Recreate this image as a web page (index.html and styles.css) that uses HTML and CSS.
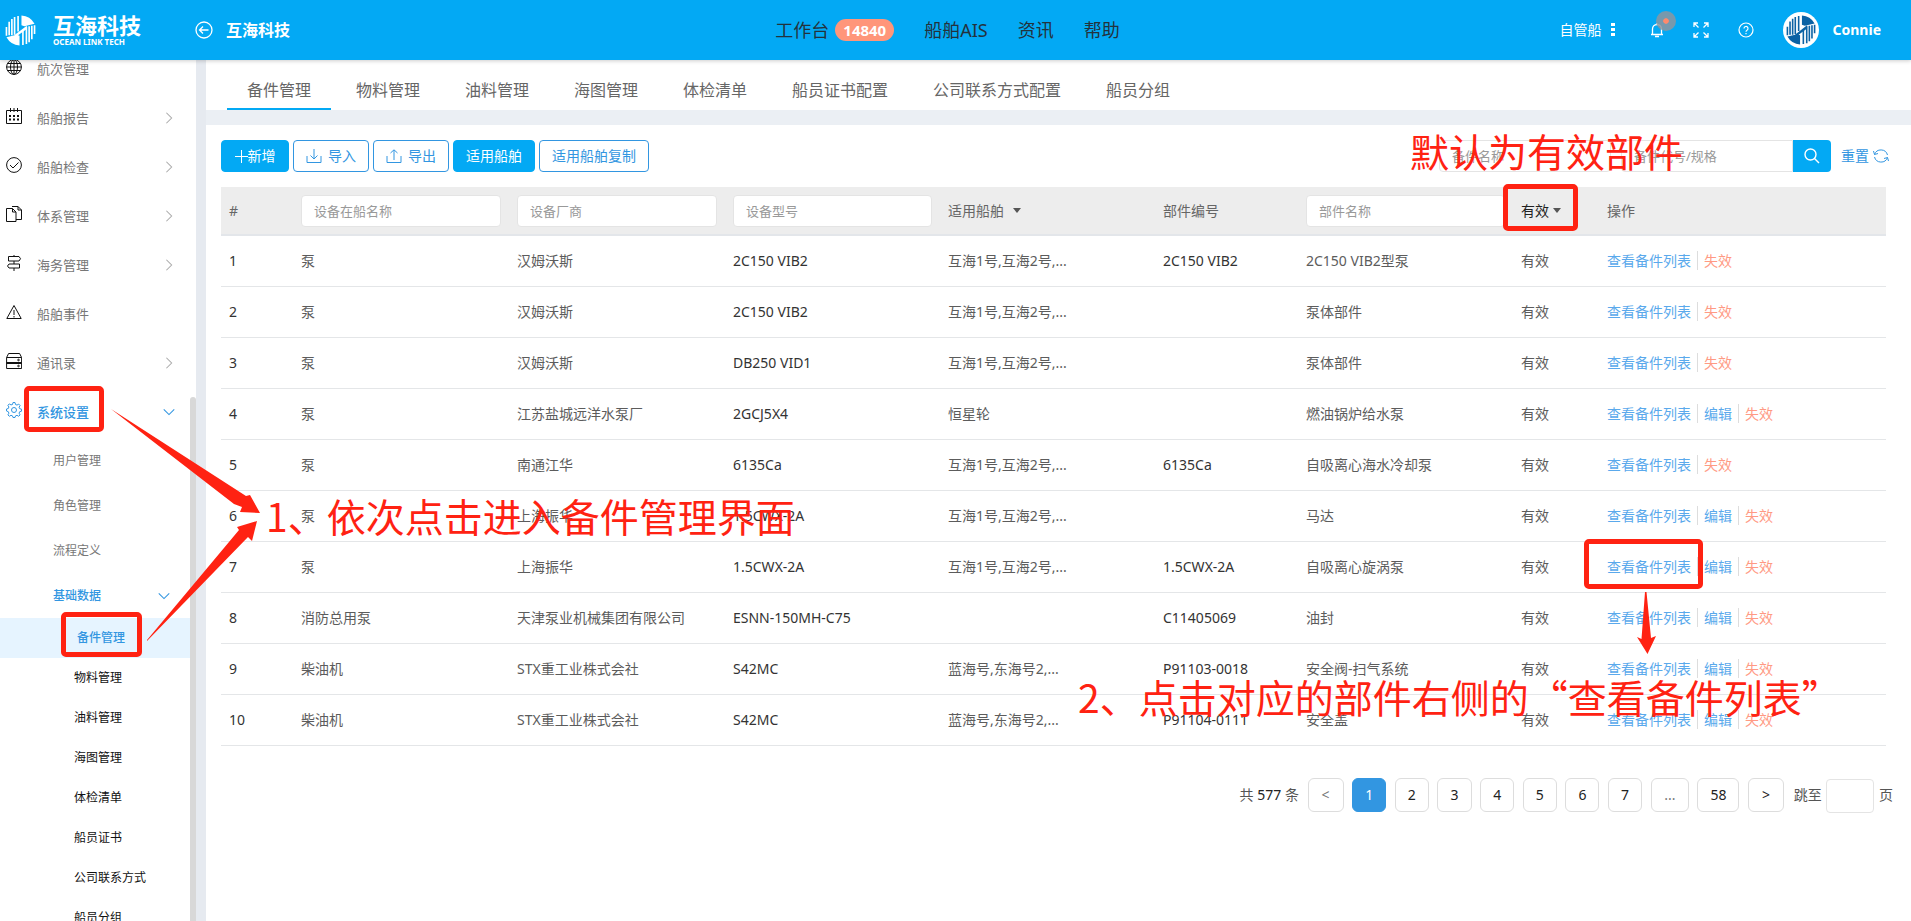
FILE: index.html
```html
<!DOCTYPE html>
<html lang="zh-CN">
<head>
<meta charset="utf-8">
<title>互海科技 - 备件管理</title>
<link rel="stylesheet" href="styles.css">
</head>
<body>
<svg class="defs" aria-hidden="true">
  <symbol id="right" viewBox="0 0 16 16"><path d="M5 2l6 6-6 6" fill="none" stroke="currentColor" stroke-width="1.2"/></symbol>
  <symbol id="down" viewBox="0 0 16 16"><path d="M2 5l6 6 6-6" fill="none" stroke="currentColor" stroke-width="1.2"/></symbol>
  <symbol id="mark" viewBox="0 0 32 32">
    <path d="M17 .5q9 .5 13.500 8.500L20 11.500l-3-1zM15 31.500Q6 31 1.500 23l10.500-2.500 3 1zM9.500 21L22.500 11v3.500L12 22z" fill="currentColor"/>
    <path d="M1.500 12.500v9M4.300 7v14M7.100 4v17M9.900 2v18.500M13.500 1v16M30.500 19.500v-9M27.700 25V11M24.900 28V11.500M22.100 30V12M18.500 31V16" fill="none" stroke="currentColor" stroke-width="1.700"/>
  </symbol>
</svg>

<header class="topbar">
  <div class="brand">
    <a class="logo" href="#">
      <svg class="logo-mark"><use href="#mark"/></svg>
      <span class="logo-text"><b>互海科技</b><small>OCEAN LINK TECH</small></span>
    </a>
    <div class="company">
      <svg width="18" height="18" viewBox="0 0 18 18" fill="none" stroke="currentColor" stroke-width="1.300"><circle cx="9" cy="9" r="8"/><path d="M13.500 9h-9M8 5.500L4.500 9 8 12.500"/></svg>
      <b>互海科技</b>
    </div>
  </div>
  <nav class="mainnav">
    <a href="#">工作台<span class="badge">14840</span></a>
    <a href="#">船舶AIS</a>
    <a href="#">资讯</a>
    <a href="#">帮助</a>
  </nav>
  <div class="tools">
    <button class="fleet">自管船<svg width="4" height="14" viewBox="0 0 4 14" fill="currentColor"><path d="M0 0h4v3H0zM0 5h4v3H0zM0 10h4v3H0z"/></svg></button>
    <button class="bell" aria-label="通知"><svg width="14" height="16" viewBox="0 0 14 16" fill="none" stroke="currentColor" stroke-width="1.300"><path d="M1 12.500h12M2.500 12.500V7a4.500 4.500 0 0 1 9 0v5.500M7 2.500V1M5 14.500h4"/></svg><i class="ping"></i></button>
    <button aria-label="全屏"><svg width="16" height="16" viewBox="0 0 16 16" fill="none" stroke="currentColor" stroke-width="1.300"><path d="M1 5V1h4M1 1l4.500 4.500M11 1h4v4M15 1l-4.500 4.500M1 11v4h4M1 15l4.500-4.500M15 11v4h-4M15 15l-4.500-4.500"/></svg></button>
    <button aria-label="帮助"><svg width="16" height="16" viewBox="0 0 16 16" fill="none" stroke="currentColor" stroke-width="1.200"><circle cx="8" cy="8" r="7"/><path d="M6 6.500a2 2 0 1 1 3 1.700q-1 .6-1 1.600M8 11v1.300"/></svg></button>
    <a class="user" href="#"><span class="avatar"><svg width="30" height="30"><use href="#mark"/></svg></span><b>Connie</b></a>
  </div>
</header>

<div class="shell">
  <aside class="sidebar">
    <ul class="menu">
      <li><a href="#"><svg viewBox="0 0 16 16"><circle cx="8" cy="8" r="7.400"/><ellipse cx="8" cy="8" rx="3.500" ry="7.400"/><path d="M8 .5v15M.5 8h15M1.500 4.500h13M1.500 11.500h13"/></svg>航次管理</a></li>
      <li><a href="#"><svg viewBox="0 0 16 16"><path d="M.5 2.500h15v13H.5zM4.500 0v4M8 0v4M11.500 0v4"/><path d="M3 8h2M7 8h2M11 8h2M3 11.500h2M7 11.500h2M11 11.500h2" stroke-width="2"/></svg>船舶报告<svg class="chev"><use href="#right"/></svg></a></li>
      <li><a href="#"><svg viewBox="0 0 16 16"><circle cx="8" cy="8" r="7.400"/><path d="M4 8l3 3 5.500-5.500"/></svg>船舶检查<svg class="chev"><use href="#right"/></svg></a></li>
      <li><a href="#"><svg viewBox="0 0 16 16"><path d="M.5 2.500h6l3.500 3.500v9.500H.5zM6.500 2.500V6H10M6 .5h6L15.500 4v9.500H10M12 .5V4h3.500"/></svg>体系管理<svg class="chev"><use href="#right"/></svg></a></li>
      <li><a href="#"><svg viewBox="0 0 16 16"><path d="M8 0v1.500M8 6v3M8 13v3M2.500 1.500H13l1.500 2.200L13 6H2.500zM13.500 9H3l-1.500 2L3 13h10.500z"/></svg>海务管理<svg class="chev"><use href="#right"/></svg></a></li>
      <li><a href="#"><svg viewBox="0 0 16 16"><path d="M8 1.500l7.200 13H.8zM8 6v5M8 12v1.500"/></svg>船舶事件</a></li>
      <li><a href="#"><svg viewBox="0 0 16 16"><path d="M.6 4.500l2-4h11l2 4v11H.6zM.6 4.500h15M.6 9.500h15M.6 10.500h15"/><circle cx="12.500" cy="7" r=".8"/><circle cx="12.500" cy="13" r=".8"/></svg>通讯录<svg class="chev"><use href="#right"/></svg></a></li>
      <li><a class="open" href="#"><svg viewBox="0 0 16 16"><circle cx="8" cy="8" r="2.500"/><path d="M6.500 2.500L7 .5h2l.5 2 1.500.6 1.700-1 1.400 1.400-1 1.700.6 1.500 1.800.5v2l-1.800.5-.6 1.500 1 1.700-1.400 1.400-1.700-1-1.500.6-.5 1.600H7l-.5-1.600-1.500-.6-1.700 1-1.400-1.400 1-1.700-.6-1.500L.5 9V7l1.800-.5.6-1.500-1-1.700 1.400-1.400 1.700 1z"/></svg>系统设置<svg class="chev"><use href="#down"/></svg></a>
        <ul class="sub">
          <li><a href="#">用户管理</a></li>
          <li><a href="#">角色管理</a></li>
          <li><a href="#">流程定义</a></li>
          <li><a class="open" href="#">基础数据<svg class="chev"><use href="#down"/></svg></a>
            <ul class="leaf">
              <li><a class="current" href="#">备件管理</a></li>
              <li><a href="#">物料管理</a></li>
              <li><a href="#">油料管理</a></li>
              <li><a href="#">海图管理</a></li>
              <li><a href="#">体检清单</a></li>
              <li><a href="#">船员证书</a></li>
              <li><a href="#">公司联系方式</a></li>
              <li><a href="#">船员分组</a></li>
            </ul>
          </li>
        </ul>
      </li>
    </ul>
    <i class="thumb"></i>
  </aside>

  <main class="main">
    <nav class="tabs">
      <a class="active" href="#">备件管理</a><a href="#">物料管理</a><a href="#">油料管理</a><a href="#">海图管理</a><a href="#">体检清单</a><a href="#">船员证书配置</a><a href="#">公司联系方式配置</a><a href="#">船员分组</a>
    </nav>

    <section class="panel">
      <div class="toolbar">
        <button class="btn solid add"><svg width="13" height="13" viewBox="0 0 13 13" fill="none" stroke="currentColor"><path d="M6.500 0v13M0 6.500h13"/></svg>新增</button>
        <button class="btn icon"><svg width="16" height="14" viewBox="0 0 16 14" fill="none" stroke="currentColor"><path d="M1 7v6.500h14V7M8 0v10M4.500 6.500L8 10l3.500-3.500"/></svg>导入</button>
        <button class="btn icon"><svg width="16" height="14" viewBox="0 0 16 14" fill="none" stroke="currentColor"><path d="M1 7v6.500h14V7M8 11V1M4.500 4L8 .8 11.500 4"/></svg>导出</button>
        <button class="btn solid">适用船舶</button>
        <button class="btn copy">适用船舶复制</button>
        <form class="search">
          <input class="name" type="text" placeholder="备件名称" aria-label="备件名称"><input class="code" type="text" placeholder="备件代号/规格" aria-label="备件代号/规格"><button class="go" type="button" aria-label="搜索"><svg width="16" height="16" viewBox="0 0 16 16" fill="none" stroke="currentColor" stroke-width="1.400"><circle cx="6.500" cy="6.500" r="5.500"/><path d="M10.500 10.500L15 15"/></svg></button>
          <a class="reset" href="#">重置<svg width="16" height="16" viewBox="0 0 16 16" fill="none" stroke="currentColor"><path d="M1.500 6.500A6.800 6.800 0 0 1 14.500 7M14.500 9.500A6.800 6.800 0 0 1 1.500 9M.5 3l1 3.500L5 5.500M15.500 13l-1-3.500-3.500 1"/></svg></a>
        </form>
      </div>

      <table class="grid">
        <colgroup><col class="c-no"><col class="c-wide"><col class="c-wide"><col class="c-mid"><col class="c-mid"><col class="c-code"><col class="c-mid"><col class="c-state"><col class="c-act"></colgroup>
        <thead>
          <tr>
            <th>#</th>
            <th><input type="text" placeholder="设备在船名称" aria-label="设备在船名称"></th>
            <th><input type="text" placeholder="设备厂商" aria-label="设备厂商"></th>
            <th><input type="text" placeholder="设备型号" aria-label="设备型号"></th>
            <th><button class="drop far">适用船舶</button></th>
            <th>部件编号</th>
            <th><input type="text" placeholder="部件名称" aria-label="部件名称"></th>
            <th><button class="drop dark">有效</button></th>
            <th>操作</th>
          </tr>
        </thead>
        <tbody>
          <tr><td>1</td><td>泵</td><td>汉姆沃斯</td><td>2C150 VIB2</td><td>互海1号,互海2号,...</td><td>2C150 VIB2</td><td>2C150 VIB2型泵</td><td>有效</td><td class="act"><a href="#">查看备件列表</a><a class="off" href="#">失效</a></td></tr>
          <tr><td>2</td><td>泵</td><td>汉姆沃斯</td><td>2C150 VIB2</td><td>互海1号,互海2号,...</td><td></td><td>泵体部件</td><td>有效</td><td class="act"><a href="#">查看备件列表</a><a class="off" href="#">失效</a></td></tr>
          <tr><td>3</td><td>泵</td><td>汉姆沃斯</td><td>DB250 VID1</td><td>互海1号,互海2号,...</td><td></td><td>泵体部件</td><td>有效</td><td class="act"><a href="#">查看备件列表</a><a class="off" href="#">失效</a></td></tr>
          <tr><td>4</td><td>泵</td><td>江苏盐城远洋水泵厂</td><td>2GCJ5X4</td><td>恒星轮</td><td></td><td>燃油锅炉给水泵</td><td>有效</td><td class="act"><a href="#">查看备件列表</a><a href="#">编辑</a><a class="off" href="#">失效</a></td></tr>
          <tr><td>5</td><td>泵</td><td>南通江华</td><td>6135Ca</td><td>互海1号,互海2号,...</td><td>6135Ca</td><td>自吸离心海水冷却泵</td><td>有效</td><td class="act"><a href="#">查看备件列表</a><a class="off" href="#">失效</a></td></tr>
          <tr><td>6</td><td>泵</td><td>上海振华</td><td>1.5CWX-2A</td><td>互海1号,互海2号,...</td><td></td><td>马达</td><td>有效</td><td class="act"><a href="#">查看备件列表</a><a href="#">编辑</a><a class="off" href="#">失效</a></td></tr>
          <tr><td>7</td><td>泵</td><td>上海振华</td><td>1.5CWX-2A</td><td>互海1号,互海2号,...</td><td>1.5CWX-2A</td><td>自吸离心旋涡泵</td><td>有效</td><td class="act"><a href="#">查看备件列表</a><a href="#">编辑</a><a class="off" href="#">失效</a></td></tr>
          <tr><td>8</td><td>消防总用泵</td><td>天津泵业机械集团有限公司</td><td>ESNN-150MH-C75</td><td></td><td>C11405069</td><td>油封</td><td>有效</td><td class="act"><a href="#">查看备件列表</a><a href="#">编辑</a><a class="off" href="#">失效</a></td></tr>
          <tr><td>9</td><td>柴油机</td><td>STX重工业株式会社</td><td>S42MC</td><td>蓝海号,东海号2,...</td><td>P91103-0018</td><td>安全阀-扫气系统</td><td>有效</td><td class="act"><a href="#">查看备件列表</a><a href="#">编辑</a><a class="off" href="#">失效</a></td></tr>
          <tr><td>10</td><td>柴油机</td><td>STX重工业株式会社</td><td>S42MC</td><td>蓝海号,东海号2,...</td><td>P91104-0111</td><td>安全盖</td><td>有效</td><td class="act"><a href="#">查看备件列表</a><a href="#">编辑</a><a class="off" href="#">失效</a></td></tr>
        </tbody>
      </table>

      <div class="pager">
        <span class="total">共 <em>577</em> 条</span>
        <button class="arrow muted">&lt;</button>
        <button class="on">1</button>
        <button>2</button>
        <button>3</button>
        <button>4</button>
        <button>5</button>
        <button>6</button>
        <button>7</button>
        <button class="more muted">...</button>
        <button>58</button>
        <button class="arrow">&gt;</button>
        <label>跳至 <input type="text"> 页</label>
      </div>
    </section>
  </main>
</div>

<div class="notes">
  <i class="frame f-system"></i>
  <i class="frame f-parts"></i>
  <i class="frame f-valid"></i>
  <i class="frame f-list"></i>
  <svg class="arrows" width="1911" height="921" fill="#ff2212">
    <path d="M111 409L246 496 250 495 260 513 240 512 242 507 234 504Z"/>
    <path d="M147 640L239 530 237 527 257 521 252 541 248 537 147 641Z"/>
    <path d="M1645 592h1.500L1651 638 1656 636 1647.500 654 1637 637 1641.500 639Z"/>
  </svg>
  <p class="note n-valid">默认为有效部件</p>
  <p class="note n-one">1、依次点击进入备件管理界面</p>
  <p class="note n-two">2、点击对应的部件右侧的“查看备件列表”</p>
</div>
</body>
</html>
```
FILE: styles.css
```css
* { box-sizing: border-box; }
html, body { height: 100%; }
body {
  margin: 0;
  display: flex;
  flex-direction: column;
  overflow: hidden;
  position: relative;
  background: #fff;
  color: #222;
  font: 14px/20px "Noto Sans", "Noto Sans CJK SC", sans-serif;
}
a { color: inherit; text-decoration: none; }
ul { list-style: none; margin: 0; padding: 0; }
button, input { font: inherit; color: inherit; margin: 0; }
button { background: none; border: 0; padding: 0; cursor: pointer; }
.defs { position: absolute; width: 0; height: 0; }

/* top bar */
.topbar {
  flex: none;
  height: 60px;
  display: flex;
  align-items: center;
  background: #03a9f4;
  color: #fff;
  box-shadow: 0 1px 4px rgba(0, 0, 0, .2);
  position: relative;
  z-index: 2;
}
.brand { flex: 1 1 0; display: flex; align-items: center; }
.logo { display: flex; align-items: center; gap: 17px; padding-left: 5px; width: 195px; }
.logo-mark { width: 31px; height: 31px; }
.logo-text { display: flex; flex-direction: column; }
.logo-text b { font-size: 22px; line-height: 24px; }
.logo-text small { font-size: 8px; line-height: 10px; font-weight: 700; white-space: nowrap; }
.company { display: flex; align-items: center; gap: 13px; font-size: 16px; }
.mainnav { display: flex; gap: 30px; margin-left: 14px; font-size: 18px; color: #23323c; }
.mainnav a { display: flex; align-items: center; gap: 6px; }
.badge { background: #ff967a; color: #fff; font-weight: 700; font-size: 15px; line-height: 22px; padding: 0 8px; border-radius: 11px; }
.tools { flex: 1 1 0; display: flex; align-items: center; justify-content: flex-end; gap: 29px; padding-right: 30px; }
.tools svg { display: block; }
.fleet { display: flex; align-items: center; gap: 9px; margin-right: 6px; }
.bell { position: relative; }
.ping { position: absolute; left: 6px; top: -11px; width: 20px; height: 20px; border-radius: 50%; border: 7px solid rgba(140, 150, 160, .85); background: #ff8a6c; background-clip: padding-box; }
.user { display: flex; align-items: center; gap: 14px; font-size: 14px; }
.avatar { width: 36px; height: 36px; border-radius: 50%; background: #fff; color: #0b62a4; display: flex; align-items: center; justify-content: center; }

/* sidebar */
.shell { flex: 1; min-height: 0; display: flex; background: #e6eaf0; }
.sidebar { flex: none; width: 196px; background: #fff; overflow: hidden; position: relative; }
.menu { margin-top: -16px; color: #777; font-size: 13px; }
.menu a { display: flex; align-items: center; height: 49px; padding: 0 17px 0 6px; gap: 15px; }
.menu svg { width: 16px; height: 16px; flex: none; fill: none; stroke: #111; margin-bottom: 4px; }
.menu .chev { width: 14px; height: 14px; margin: 0 3px 0 auto; color: #aaa; stroke: none; }
.menu .open { color: #3296e1; font-weight: 500; }
.menu .open svg { stroke: #3296e1; }
.menu .open .chev { color: #3296e1; stroke: none; }
.sub { font-size: 12px; padding-top: 2px; }
.sub a { height: 45px; padding-left: 53px; padding-right: 22px; }
.leaf { color: #111; }
.leaf a { height: 40px; padding-left: 74px; }
.leaf .current { background: #e6f4ff; color: #3296e1; font-weight: 500; padding-left: 77px; }
.thumb { position: absolute; right: 0; top: 337px; bottom: 0; width: 6px; border-radius: 3px 3px 0 0; background: #d8d8d8; }

/* content */
.main { flex: 1; min-width: 0; margin-left: 10px; display: flex; flex-direction: column; gap: 15px; background: #ebeff4; }
.tabs { display: flex; gap: 5px; height: 50px; padding: 4px 0 0 21px; background: #fff; font-size: 16px; color: #666; }
.tabs a { padding: 0 20px; height: 46px; line-height: 52px; }
.tabs .active { border-bottom: 2px solid #03a9f4; }
.panel { flex: 1; background: #fff; padding: 15px 26px 0 15px; }
.toolbar { display: flex; gap: 4px; margin-bottom: 15px; }
.btn { height: 32px; min-width: 82px; border: 1px solid #3296e1; border-radius: 4px; color: #3296e1; display: flex; align-items: center; justify-content: center; white-space: nowrap; }
.btn.icon { min-width: 76px; gap: 6px; }
.btn.solid { background: #03a9f4; border-color: #03a9f4; color: #fff; }
.btn.add { min-width: 68px; }
.btn.copy { min-width: 110px; }
.search { display: flex; align-items: center; margin: 0 -4px 0 auto; }
input { height: 32px; border: 1px solid #e4e4e4; border-radius: 4px; background: #fff; outline: 0; }
input::placeholder { color: #999; opacity: 1; }
.search input { width: 172px; padding: 0 12px; font-size: 13px; }
.search .name { margin-right: 10px; }
.search .code { border-radius: 4px 0 0 4px; }
.go { width: 38px; height: 32px; background: #03a9f4; color: #fff; border-radius: 0 4px 4px 0; display: flex; align-items: center; justify-content: center; }
.reset { display: flex; align-items: center; gap: 4px; margin-left: 10px; color: #3296e1; }

.grid { width: 100%; table-layout: fixed; border-collapse: separate; border-spacing: 0; }
.c-no { width: 72px; } .c-wide { width: 216px; } .c-mid { width: 215px; } .c-code { width: 143px; } .c-state { width: 86px; } .c-act { width: 287px; }
.grid th { height: 49px; padding: 0 8px; background: #ededed; border-bottom: 2px solid #e3e6ea; text-align: left; font-weight: 400; color: #666; }
.grid th input { width: 100%; padding: 0 12px; font-size: 13px; }
.grid td { height: 51px; padding: 0 8px; border-bottom: 1px solid #e4e6e8; white-space: nowrap; color: #333; }
.grid td:nth-child(2), .grid td:nth-child(3), .grid td:nth-child(5), .grid td:nth-child(7), .grid td:nth-child(8) { color: #5c5c5c; }
.drop { display: flex; align-items: center; gap: 4px; }
.drop::after { content: ""; border: 4px solid transparent; border-top: 5px solid #555; border-bottom: 0; }
.drop.far { gap: 9px; }
.drop.dark { color: #222; }
.act a { color: #5aa9ec; }
.act a + a { margin-left: 6px; padding-left: 6px; border-left: 1px solid #ddd; }
.act .off { color: #ff9a84; }

.pager { margin: 32px -8px 0 0; text-align: right; color: #555; white-space: nowrap; }
.pager em { font-style: normal; color: #222; }
.pager .total { margin-right: 5px; }
.pager button { min-width: 34px; height: 34px; padding: 0 12px; margin-right: 5px; border: 1px solid #ddd; border-radius: 6px; background: #fff; color: #222; font-size: 14px; }
.pager .arrow { min-width: 36px; }
.pager .more { min-width: 38px; }
.pager .muted { color: #777; }
.pager .on { background: #3296e1; border-color: #3296e1; color: #fff; }
.pager label { margin-left: 1px; }
.pager input { width: 48px; height: 34px; margin: 0 1px; vertical-align: middle; }

/* tutorial marks over the page */
.notes { position: absolute; inset: 0; z-index: 5; pointer-events: none; overflow: hidden; }
.arrows { position: absolute; left: 0; top: 0; }
.frame { position: absolute; border: 5px solid #ff2212; border-radius: 5px; }
.f-system { left: 24px; top: 386px; width: 80px; height: 46px; }
.f-parts { left: 61px; top: 612px; width: 81px; height: 45px; }
.f-valid { left: 1503px; top: 184px; width: 75px; height: 47px; }
.f-list { left: 1584px; top: 539px; width: 119px; height: 50px; }
.note { position: absolute; margin: 0; color: #ff2212; font: 39px/48px "Noto Sans CJK SC", sans-serif; white-space: nowrap; }
.n-valid { left: 1410px; top: 126px; }
.n-one { left: 266px; top: 491px; }
.n-two { left: 1078px; top: 672px; }
```
